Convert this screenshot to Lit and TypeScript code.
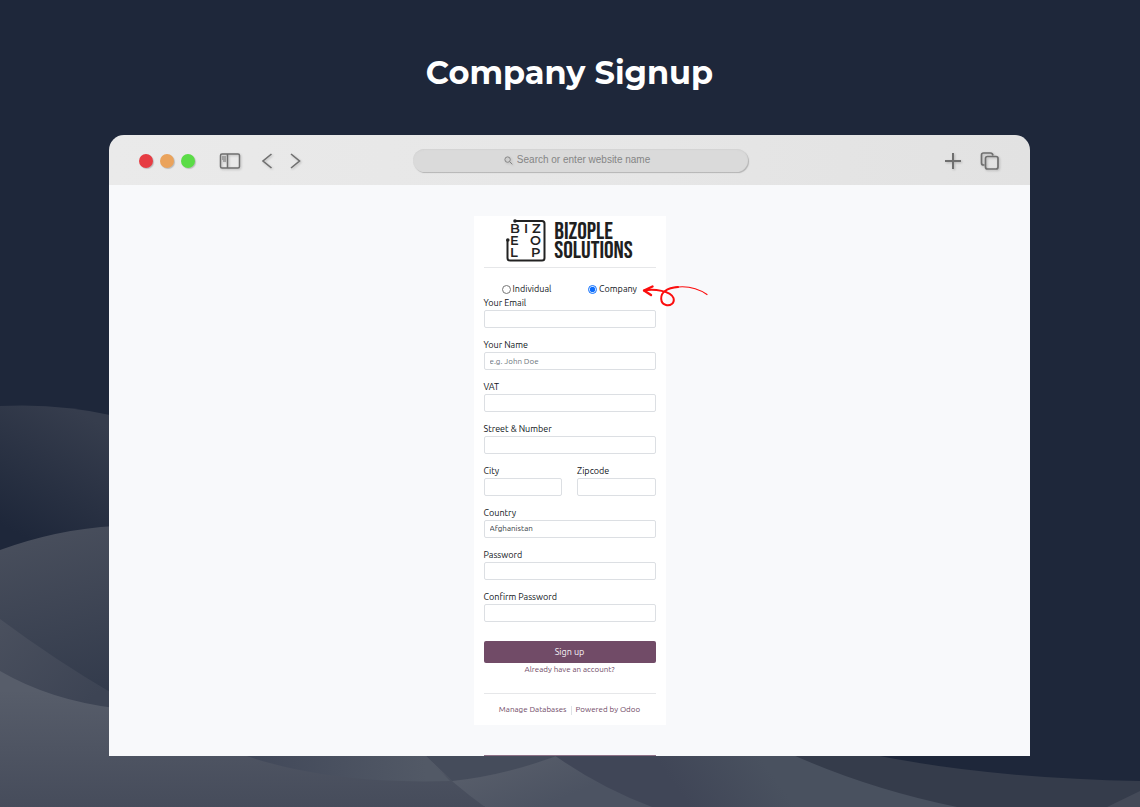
import { LitElement, html, css, svg } from "lit";
import { customElement, state } from "lit/decorators.js";

@customElement("wave-backdrop")
class WaveBackdrop extends LitElement {
  static styles = css`
    :host { display: block; }
    svg { display: block; width: 100%; height: 100%; }
  `;

  render() {
    const stops = (id: string, v: number[], a: string, b: string) => svg`
      <linearGradient id=${id} gradientUnits="userSpaceOnUse" x1=${v[0]} y1=${v[1]} x2=${v[2]} y2=${v[3]}>
        <stop offset="0" stop-color=${a}></stop><stop offset="1" stop-color=${b}></stop>
      </linearGradient>`;
    return html`
      <svg viewBox="0 0 1140 807" preserveAspectRatio="none" aria-hidden="true">
        <defs>
          ${stops("a", [85, 415, 20, 535], "#363d4d", "#1e273a")}
          ${stops("b", [60, 530, 100, 690], "#484e5c", "#333b4c")}
          ${stops("c", [0, 620, 80, 710], "#4a505e", "#3d4454")}
          ${stops("d", [0, 690, 0, 807], "#575d6a", "#464c5b")}
          ${stops("e", [250, 770, 425, 757], "#414859", "#525966")}
          ${stops("f", [520, 757, 540, 807], "#565c69", "#4c5362")}
          ${stops("g", [690, 807, 760, 757], "#404657", "#49515f")}
        </defs>
        <path fill="#353c4b" d="M860 752Q980 778 1140 781V807H760V752Z"></path>
        <path fill="#444a58" d="M1140 791L1107 807H1140Z"></path>
        <path fill="url(#a)" d="M0 406Q60 403 115 416V600H0Z"></path>
        <path fill="url(#b)" d="M0 550Q58 529 115 526V720H0Z"></path>
        <path fill="url(#c)" d="M0 619Q55 660 115 695V730H0Z"></path>
        <path fill="url(#d)" d="M0 671Q50 700 115 708H425L485 807H0Z"></path>
        <path fill="url(#f)" d="M420 750Q445 778 485 807H655V750Z"></path>
        <path fill="url(#e)" d="M230 750Q320 785 450 781L420 750Z"></path>
        <path fill="#454c5b" d="M420 750L452 781Q510 775 572 750Z"></path>
        <path fill="url(#g)" d="M547 750Q596 786 652 807H957Q864 788 782 750Z"></path>
      </svg>
    `;
  }
}

@customElement("browser-toolbar")
class BrowserToolbar extends LitElement {
  static styles = css`
    :host {
      display: grid;
      grid-template-columns: 14fr 335px 13fr;
      align-items: center;
      height: 50px;
      border-radius: 15px 15px 0 0;
      background: linear-gradient(90deg, #eaeaea, #e6e6e6 60%, #e2e2e2);
    }
    button {
      display: block;
      padding: 0;
      border: 0;
      background: none;
      color: #6f6f6f;
    }
    svg {
      display: block;
      fill: none;
      stroke: currentColor;
      filter: drop-shadow(1px 1px 1px #0003);
    }
    .left { display: flex; align-items: center; padding: 2px 0 0 30px; }
    .lights { display: flex; gap: 7px; margin-right: 24px; }
    .light {
      width: 14px;
      height: 14px;
      border-radius: 50%;
      box-shadow: 1px 1px 1px #0003;
    }
    .close { background: #e63c43; }
    .minimise { background: #eaa35c; }
    .expand { background: #5bdc47; }
    .panel { margin-right: 20px; }
    .back { margin-right: 16px; }
    .address {
      display: flex;
      align-items: center;
      justify-content: center;
      gap: 4px;
      height: 23px;
      border-radius: 12px;
      background: #dadada;
      box-shadow: 1px 1px 1px #8888, inset 0 1px 1px #ccc8;
      color: #858585;
    }
    .address input {
      width: 140px;
      padding: 0;
      border: 0;
      background: none;
      font: 10px/14px "Liberation Sans", sans-serif;
      color: #858585;
      outline: none;
    }
    .address input::placeholder { color: #858585; opacity: 1; }
    .right { display: flex; justify-content: flex-end; gap: 18px; padding: 2px 31px 0 0; }
  `;

  render() {
    return html`
      <div class="left">
        <div class="lights">
          <button class="light close" aria-label="Close"></button>
          <button class="light minimise" aria-label="Minimise"></button>
          <button class="light expand" aria-label="Expand"></button>
        </div>
        <button class="panel" aria-label="Sidebar">
          <svg width="22" height="16" viewBox="0 0 22 16" stroke-width="1.5">
            <rect x="1.5" y="1" width="19" height="14" rx="1.5"></rect>
            <path d="M8.5 1V15"></path>
            <path stroke-width="1" d="M3 4H7M3 6H7M4 8H7"></path>
          </svg>
        </button>
        <button class="back" aria-label="Back">
          <svg width="12" height="16" viewBox="0 0 12 16" stroke-width="1.6"><path d="M10.5 1L2 8L10.5 15"></path></svg>
        </button>
        <button aria-label="Forward">
          <svg width="12" height="16" viewBox="0 0 12 16" stroke-width="1.6"><path d="M2 1L10.500 8L2 15"></path></svg>
        </button>
      </div>
      <div class="address">
        <svg width="9" height="9" viewBox="0 0 9 9" stroke-width="1"><circle cx="3.600" cy="3.600" r="2.700"></circle><path d="M5.600 5.600L8.300 8.300"></path></svg>
        <input type="text" aria-label="Address" placeholder="Search or enter website name">
      </div>
      <div class="right">
        <button aria-label="New tab">
          <svg width="18" height="18" viewBox="0 0 18 18" stroke-width="2"><path d="M9 1V17M1 9H17"></path></svg>
        </button>
        <button aria-label="Tabs">
          <svg width="19" height="18" viewBox="0 0 19 18" stroke-width="1.700">
            <path d="M4.500 13H3.500Q1.500 13 1.500 11V3Q1.500 1 3.500 1H10.500Q12.500 1 13 3.500"></path>
            <rect x="5.500" y="4.500" width="12.500" height="12.500" rx="2"></rect>
          </svg>
        </button>
      </div>
    `;
  }
}

@customElement("signup-card")
class SignupCard extends LitElement {
  @state() private kind = "company";

  static styles = css`
    :host {
      display: block;
      position: relative;
      box-sizing: border-box;
      width: 192px;
      padding: 3px 10px 8px;
      background: #fff;
      font: 9px/14px Ubuntu, "Noto Sans", sans-serif;
      color: #10151a;
    }
    .logo {
      display: flex;
      justify-content: center;
      align-items: center;
      gap: 8px;
      height: 43px;
      padding-bottom: 5px;
    }
    .logo svg { display: block; }
    .mark-line { fill: none; stroke: #222; stroke-width: 2; }
    .mark-text { font: 600 13px Montserrat, Inter, sans-serif; fill: #222; }
    .brand {
      font: 24px/19px "Bebas Neue", "Roboto Condensed", sans-serif;
      color: #1f1f1f;
    }
    .rule { border: 0; border-top: 1px solid #e6e7e9; margin: 0; }
    .kinds { display: grid; grid-template-columns: 1fr 1fr; padding: 15px 0 0; }
    .kinds label { display: flex; justify-content: center; align-items: center; gap: 2px; line-height: 13px; }
    .kinds input { width: 9px; height: 9px; margin: 0; accent-color: #0d6efd; }
    .fields { display: grid; grid-template-columns: 1fr 1fr; gap: 10px 15px; }
    .field { grid-column: span 2; display: flex; flex-direction: column; min-width: 0; }
    .half { grid-column: span 1; }
    .control {
      box-sizing: border-box;
      width: 100%;
      height: 18px;
      padding: 0 5px;
      border: 1px solid #dcdfe3;
      border-radius: 2px;
      background: #fff;
      appearance: none;
      font: 8px/14px Ubuntu, "Noto Sans", sans-serif;
      color: #343a40;
    }
    .control::placeholder { color: #6c757d; opacity: 1; }
    .submit {
      display: block;
      width: 100%;
      height: 22px;
      margin-top: 19px;
      padding: 0;
      border: 0;
      border-radius: 2px;
      background: #714b67;
      color: #f5f0f4;
      font: 9px/14px Ubuntu, "Noto Sans", sans-serif;
    }
    .links {
      display: flex;
      justify-content: center;
      align-items: center;
      font-size: 8px;
      line-height: 14px;
    }
    .links a { color: #714b67; text-decoration: none; }
    .footer { gap: 4px; padding-top: 9px; }
    .divider { width: 1px; height: 9px; background: #dee2e6; }
    .login { padding-bottom: 16px; }
    .arrow { position: absolute; left: 168px; top: 66px; fill: none; stroke: #fb0d0d; stroke-linecap: round; }
  `;

  private input(id: string, label: string, type = "text", half = false, hint = "") {
    return html`
      <div class=${half ? "field half" : "field"}>
        <label for=${id}>${label}</label>
        <input class="control" id=${id} type=${type} placeholder=${hint}>
      </div>`;
  }

  private radio(value: string, label: string) {
    return html`
      <label>
        <input type="radio" name="kind" .checked=${this.kind === value} @change=${() => (this.kind = value)}>
        ${label}
      </label>`;
  }

  render() {
    return html`
      <div class="logo">
        <svg width="40" height="43" viewBox="0 0 40 43" aria-hidden="true">
          <path class="mark-line" d="M9 2H36Q38.500 2 38.500 4.500V39Q38.500 41.500 36 41.500H4Q1.500 41.500 1.500 39V21"></path>
          <circle cx="9" cy="2" r="1.800" fill="#222"></circle>
          <circle cx="1.800" cy="21" r="1.800" fill="#222"></circle>
          <text class="mark-text" x="4" y="14">B</text>
          <text class="mark-text" x="18" y="14">I</text>
          <text class="mark-text" x="26" y="14">Z</text>
          <text class="mark-text" x="4" y="26">E</text>
          <text class="mark-text" x="24" y="26">O</text>
          <text class="mark-text" x="4" y="38">L</text>
          <text class="mark-text" x="25" y="38">P</text>
        </svg>
        <div class="brand">BIZOPLE<br>SOLUTIONS</div>
      </div>
      <hr class="rule">
      <form @submit=${(e: Event) => e.preventDefault()}>
        <div class="kinds">
          ${this.radio("individual", "Individual")}
          ${this.radio("company", "Company")}
        </div>
        <div class="fields">
          ${this.input("email", "Your Email", "email")}
          ${this.input("name", "Your Name", "text", false, "e.g. John Doe")}
          ${this.input("vat", "VAT")}
          ${this.input("street", "Street & Number")}
          ${this.input("city", "City", "text", true)}
          ${this.input("zip", "Zipcode", "text", true)}
          <div class="field">
            <label for="country">Country</label>
            <select class="control" id="country"><option>Afghanistan</option></select>
          </div>
          ${this.input("password", "Password", "password")}
          ${this.input("confirm", "Confirm Password", "password")}
        </div>
        <button class="submit" type="submit">Sign up</button>
      </form>
      <div class="links login"><a href="#login">Already have an account?</a></div>
      <hr class="rule">
      <div class="links footer"><a href="#databases">Manage Databases</a><span class="divider"></span><a href="#odoo">Powered by Odoo</a></div>
      <svg class="arrow" width="68" height="28" viewBox="0 0 68 28" aria-hidden="true">
        <path stroke-width="2" d="M2 8.500C12 6.500 29 9 31.500 16C33 21.500 28 24 24 23C18 21.500 17.500 13 23 9C27 6 31 5.300 36 5"></path>
        <path stroke-width="1.200" d="M33 5.300C45 3.500 57 7 65 12.500"></path>
        <path stroke-width="2.400" stroke-linejoin="round" d="M10.500 4.500L2 8.500L9 13"></path>
      </svg>
    `;
  }
}

@customElement("app-root")
class AppRoot extends LitElement {
  static styles = css`
    :host {
      display: block;
      position: relative;
      box-sizing: border-box;
      min-height: 100vh;
      padding: 52px 110px 51px 109px;
      background: #1e273a;
    }
    .backdrop { position: absolute; inset: 0; }
    .content { position: relative; }
    h1 {
      margin: 0 0 41px;
      font: bold 32px/42px Montserrat, Inter, sans-serif;
      color: #fff;
      text-align: center;
    }
    .page {
      display: flex;
      flex-direction: column;
      align-items: center;
      gap: 30px;
      padding-top: 31px;
      background: #f8f9fb;
    }
    .edge { width: 172px; height: 1px; background: #8d7186; }
  `;

  render() {
    return html`
      <wave-backdrop class="backdrop"></wave-backdrop>
      <main class="content">
        <h1>Company Signup</h1>
        <browser-toolbar></browser-toolbar>
        <div class="page">
          <signup-card></signup-card>
          <div class="edge"></div>
        </div>
      </main>
    `;
  }
}
